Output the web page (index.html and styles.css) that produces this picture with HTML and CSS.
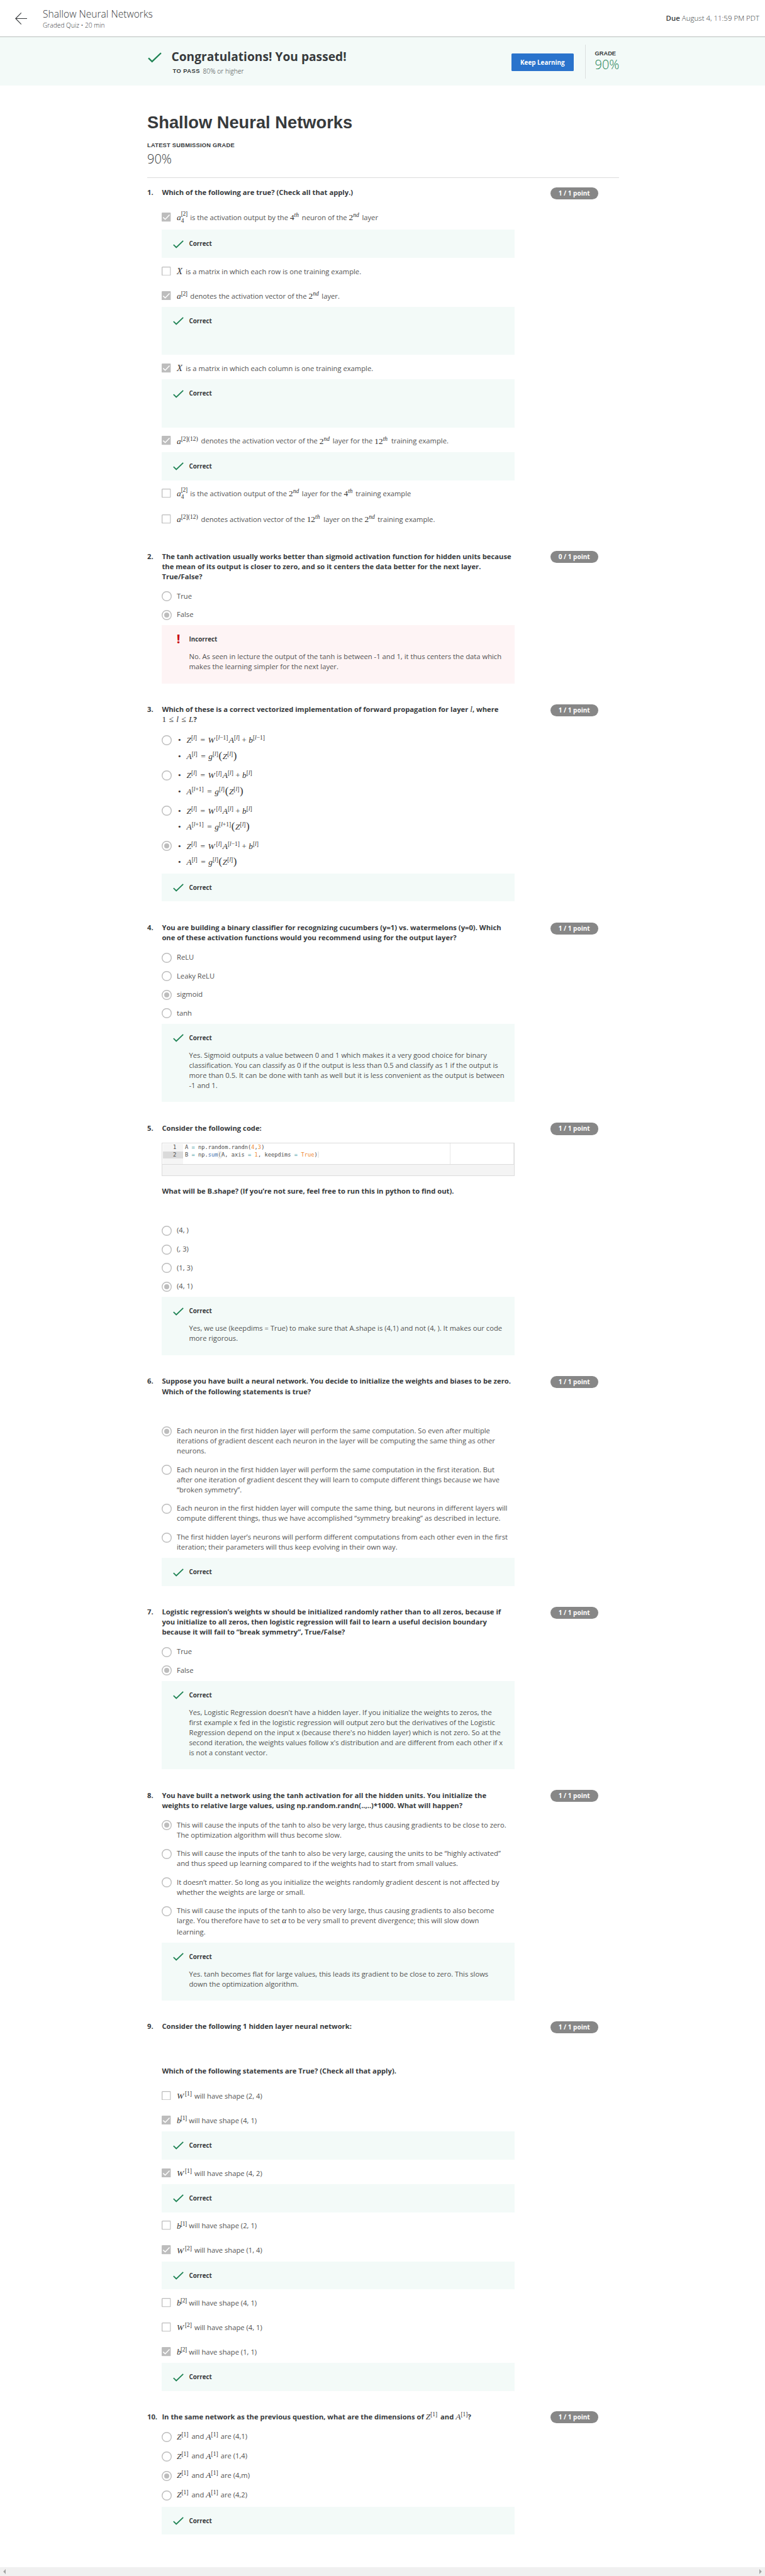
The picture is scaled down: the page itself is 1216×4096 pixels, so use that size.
FILE: index.html
```html
<!DOCTYPE html>
<html lang="en">
<head>
<meta charset="utf-8">
<title>Shallow Neural Networks</title>
<link rel="stylesheet" href="styles.css">
</head>
<body>
<svg class="defs" width="0" height="0" aria-hidden="true">
  <symbol id="tick" viewBox="0 0 17 13"><path d="M.8 7.2 5.2 11.4 16.2.9" fill="none" stroke="#1f8354" stroke-width="1.8"/></symbol>
  <symbol id="box-on" viewBox="0 0 14.6 14.6"><rect width="14.6" height="14.6" rx="1.3" fill="#bdbdbd"/><path d="M2.3 7.6 5.6 10.8 12.5 3.6" fill="none" stroke="#fff" stroke-width="1.5"/></symbol>
  <symbol id="box-off" viewBox="0 0 14.6 14.6"><rect x=".65" y=".65" width="13.3" height="13.3" rx=".8" fill="#fff" stroke="#bdbdbd" stroke-width="1.3"/></symbol>
  <symbol id="dot-off" viewBox="0 0 16 16"><circle cx="8" cy="8" r="7.3" fill="#fff" stroke="#bdbdbd" stroke-width="1.4"/></symbol>
  <symbol id="dot-on" viewBox="0 0 16 16"><circle cx="8" cy="8" r="7.3" fill="#fff" stroke="#bdbdbd" stroke-width="1.4"/><circle cx="8" cy="8" r="4" fill="#bdbdbd"/></symbol>
</svg>

<header class="topbar">
  <svg class="back" viewBox="0 0 19 19"><path d="M19 9.5H.8M9.8.4.8 9.5l9 9.1" fill="none" stroke="#373a3c" stroke-width="1.1"/></svg>
  <div class="heading"><div class="name">Shallow Neural Networks</div><div class="kind">Graded Quiz • 20 min</div></div>
  <div class="due"><b>Due</b> August 4, 11:59 PM PDT</div>
</header>

<section class="banner">
  <svg class="big-tick"><use href="#tick"/></svg>
  <div class="verdict"><div class="congrats">Congratulations! You passed!</div><div class="topass"><b>TO PASS</b><span>80% or higher</span></div></div>
  <div class="keep">Keep Learning</div>
  <div class="grade"><b>GRADE</b><span>90%</span></div>
</section>

<main class="content">
  <h1>Shallow Neural Networks</h1>
  <div class="latest">LATEST SUBMISSION GRADE</div>
  <div class="score">90%</div>

  <div class="questions">
  <section class="question first">
    <div class="num">1.</div>
    <div class="body">
      <div class="prompt">Which of the following are true? (Check all that apply.)</div>
      <div class="checks">
        <div class="check tall"><svg><use href="#box-on"/></svg><p><span class="m w-a"><i>a</i><span class="stack"><span>[2]</span><span>4</span></span></span>is the activation output by the <span class="m w-4th">4<sup><i>th</i></sup></span>neuron of the <span class="m w-2nd">2<sup><i>nd</i></sup></span>layer</p></div>
        <div class="feedback"><svg><use href="#tick"/></svg><div class="label">Correct</div></div>
        <div class="check"><svg><use href="#box-off"/></svg><p><span class="m w-x"><i>X</i></span>is a matrix in which each row is one training example.</p></div>
        <div class="check"><svg><use href="#box-on"/></svg><p><span class="m w-a"><i>a</i><sup>[2]</sup></span>denotes the activation vector of the <span class="m w-2nd">2<sup><i>nd</i></sup></span>layer.</p></div>
        <div class="feedback blank"><svg><use href="#tick"/></svg><div class="label">Correct</div></div>
        <div class="check"><svg><use href="#box-on"/></svg><p><span class="m w-x"><i>X</i></span>is a matrix in which each column is one training example.</p></div>
        <div class="feedback blank"><svg><use href="#tick"/></svg><div class="label">Correct</div></div>
        <div class="check"><svg><use href="#box-on"/></svg><p><span class="m w-a12"><i>a</i><sup>[2](12)</sup></span>denotes the activation vector of the <span class="m w-2nd">2<sup><i>nd</i></sup></span>layer for the <span class="m w-12th">12<sup><i>th</i></sup></span>training example.</p></div>
        <div class="feedback"><svg><use href="#tick"/></svg><div class="label">Correct</div></div>
        <div class="check tall"><svg><use href="#box-off"/></svg><p><span class="m w-a"><i>a</i><span class="stack"><span>[2]</span><span>4</span></span></span>is the activation output of the <span class="m w-2nd">2<sup><i>nd</i></sup></span>layer for the <span class="m w-4th">4<sup><i>th</i></sup></span>training example</p></div>
        <div class="check"><svg><use href="#box-off"/></svg><p><span class="m w-a12"><i>a</i><sup>[2](12)</sup></span>denotes activation vector of the <span class="m w-12th">12<sup><i>th</i></sup></span>layer on the <span class="m w-2nd">2<sup><i>nd</i></sup></span>training example.</p></div>
      </div>
    </div>
    <div class="pill">1 / 1 point</div>
  </section>

  <section class="question">
    <div class="num">2.</div>
    <div class="body">
      <div class="prompt">The tanh activation usually works better than sigmoid activation function for hidden units because<br>the mean of its output is closer to zero, and so it centers the data better for the next layer.<br>True/False?</div>
      <div class="radios">
        <div class="radio"><svg><use href="#dot-off"/></svg><p>True</p></div>
        <div class="radio"><svg><use href="#dot-on"/></svg><p>False</p></div>
      </div>
      <div class="feedback wrong"><span class="bang">!</span><div class="label">Incorrect</div><p>No. As seen in lecture the output of the tanh is between -1 and 1, it thus centers the data which<br>makes the learning simpler for the next layer.</p></div>
    </div>
    <div class="pill">0 / 1 point</div>
  </section>

  <section class="question">
    <div class="num">3.</div>
    <div class="body">
      <div class="prompt math-prompt">Which of these is a correct vectorized implementation of forward propagation for layer <span class="m"><i>l</i></span>, where<br><span class="m range">1 <span class="le">≤</span> <i>l</i> <span class="le">≤</span> <i>L</i></span>?</div>
      <div class="radios equations">
        <div class="radio"><svg><use href="#dot-off"/></svg><ul>
          <li class="m"><i>Z</i><sup>[<i>l</i>]</sup><span class="eq">=</span><i>W</i><sup class="far">[<i>l</i>−1]</sup><i class="next">A</i><sup>[<i>l</i>]</sup><span class="plus">+</span><i>b</i><sup>[<i>l</i>−1]</sup></li>
          <li class="m"><i>A</i><sup>[<i>l</i>]</sup><span class="eq">=</span><i>g</i><sup>[<i>l</i>]</sup><span class="paren">(</span><i>Z</i><sup>[<i>l</i>]</sup><span class="paren">)</span></li></ul></div>
        <div class="radio"><svg><use href="#dot-off"/></svg><ul>
          <li class="m"><i>Z</i><sup>[<i>l</i>]</sup><span class="eq">=</span><i>W</i><sup class="far">[<i>l</i>]</sup><i class="next">A</i><sup>[<i>l</i>]</sup><span class="plus">+</span><i>b</i><sup>[<i>l</i>]</sup></li>
          <li class="m"><i>A</i><sup>[<i>l</i>+1]</sup><span class="eq">=</span><i>g</i><sup>[<i>l</i>]</sup><span class="paren">(</span><i>Z</i><sup>[<i>l</i>]</sup><span class="paren">)</span></li></ul></div>
        <div class="radio"><svg><use href="#dot-off"/></svg><ul>
          <li class="m"><i>Z</i><sup>[<i>l</i>]</sup><span class="eq">=</span><i>W</i><sup class="far">[<i>l</i>]</sup><i class="next">A</i><sup>[<i>l</i>]</sup><span class="plus">+</span><i>b</i><sup>[<i>l</i>]</sup></li>
          <li class="m"><i>A</i><sup>[<i>l</i>+1]</sup><span class="eq">=</span><i>g</i><sup>[<i>l</i>+1]</sup><span class="paren">(</span><i>Z</i><sup>[<i>l</i>]</sup><span class="paren">)</span></li></ul></div>
        <div class="radio"><svg><use href="#dot-on"/></svg><ul>
          <li class="m"><i>Z</i><sup>[<i>l</i>]</sup><span class="eq">=</span><i>W</i><sup class="far">[<i>l</i>]</sup><i class="next">A</i><sup>[<i>l</i>−1]</sup><span class="plus">+</span><i>b</i><sup>[<i>l</i>]</sup></li>
          <li class="m"><i>A</i><sup>[<i>l</i>]</sup><span class="eq">=</span><i>g</i><sup>[<i>l</i>]</sup><span class="paren">(</span><i>Z</i><sup>[<i>l</i>]</sup><span class="paren">)</span></li></ul></div>
      </div>
      <div class="feedback"><svg><use href="#tick"/></svg><div class="label">Correct</div></div>
    </div>
    <div class="pill">1 / 1 point</div>
  </section>

  <section class="question">
    <div class="num">4.</div>
    <div class="body">
      <div class="prompt">You are building a binary classifier for recognizing cucumbers (y=1) vs. watermelons (y=0). Which<br>one of these activation functions would you recommend using for the output layer?</div>
      <div class="radios">
        <div class="radio"><svg><use href="#dot-off"/></svg><p>ReLU</p></div>
        <div class="radio"><svg><use href="#dot-off"/></svg><p>Leaky ReLU</p></div>
        <div class="radio"><svg><use href="#dot-on"/></svg><p>sigmoid</p></div>
        <div class="radio"><svg><use href="#dot-off"/></svg><p>tanh</p></div>
      </div>
      <div class="feedback"><svg><use href="#tick"/></svg><div class="label">Correct</div><p>Yes. Sigmoid outputs a value between 0 and 1 which makes it a very good choice for binary<br>classification. You can classify as 0 if the output is less than 0.5 and classify as 1 if the output is<br>more than 0.5. It can be done with tanh as well but it is less convenient as the output is between<br>-1 and 1.</p></div>
    </div>
    <div class="pill">1 / 1 point</div>
  </section>

  <section class="question">
    <div class="num">5.</div>
    <div class="body">
      <div class="prompt">Consider the following code:</div>
      <div class="editor">
        <div class="pane">
          <div class="gutter"><div>1</div><div class="active">2</div></div>
          <div class="code"><div>A <em>=</em> np.random.randn(<b>4</b>,<b>3</b>)</div><div>B <em>=</em> np.<u>sum</u><span class="match">(</span>A, axis <em>=</em> <b>1</b>, keepdims <em>=</em> <b>True</b><span class="cursor">)</span></div></div>
          <div class="ruler"></div>
        </div>
        <div class="tray"></div>
      </div>
      <div class="prompt after-editor">What will be B.shape? (If you’re not sure, feel free to run this in python to find out).</div>
      <div class="radios spaced">
        <div class="radio"><svg><use href="#dot-off"/></svg><p>(4, )</p></div>
        <div class="radio"><svg><use href="#dot-off"/></svg><p>(, 3)</p></div>
        <div class="radio"><svg><use href="#dot-off"/></svg><p>(1, 3)</p></div>
        <div class="radio"><svg><use href="#dot-on"/></svg><p>(4, 1)</p></div>
      </div>
      <div class="feedback"><svg><use href="#tick"/></svg><div class="label">Correct</div><p>Yes, we use (keepdims = True) to make sure that A.shape is (4,1) and not (4, ). It makes our code<br>more rigorous.</p></div>
    </div>
    <div class="pill">1 / 1 point</div>
  </section>

  <section class="question">
    <div class="num">6.</div>
    <div class="body">
      <div class="prompt">Suppose you have built a neural network. You decide to initialize the weights and biases to be zero.<br>Which of the following statements is true?</div>
      <div class="radios spaced">
        <div class="radio"><svg><use href="#dot-on"/></svg><p>Each neuron in the first hidden layer will perform the same computation. So even after multiple<br>iterations of gradient descent each neuron in the layer will be computing the same thing as other<br>neurons.</p></div>
        <div class="radio"><svg><use href="#dot-off"/></svg><p>Each neuron in the first hidden layer will perform the same computation in the first iteration. But<br>after one iteration of gradient descent they will learn to compute different things because we have<br>“broken symmetry”.</p></div>
        <div class="radio"><svg><use href="#dot-off"/></svg><p>Each neuron in the first hidden layer will compute the same thing, but neurons in different layers will<br>compute different things, thus we have accomplished “symmetry breaking” as described in lecture.</p></div>
        <div class="radio"><svg><use href="#dot-off"/></svg><p>The first hidden layer’s neurons will perform different computations from each other even in the first<br>iteration; their parameters will thus keep evolving in their own way.</p></div>
      </div>
      <div class="feedback"><svg><use href="#tick"/></svg><div class="label">Correct</div></div>
    </div>
    <div class="pill">1 / 1 point</div>
  </section>

  <section class="question">
    <div class="num">7.</div>
    <div class="body">
      <div class="prompt">Logistic regression’s weights w should be initialized randomly rather than to all zeros, because if<br>you initialize to all zeros, then logistic regression will fail to learn a useful decision boundary<br>because it will fail to “break symmetry”, True/False?</div>
      <div class="radios">
        <div class="radio"><svg><use href="#dot-off"/></svg><p>True</p></div>
        <div class="radio"><svg><use href="#dot-on"/></svg><p>False</p></div>
      </div>
      <div class="feedback"><svg><use href="#tick"/></svg><div class="label">Correct</div><p>Yes, Logistic Regression doesn't have a hidden layer. If you initialize the weights to zeros, the<br>first example x fed in the logistic regression will output zero but the derivatives of the Logistic<br>Regression depend on the input x (because there's no hidden layer) which is not zero. So at the<br>second iteration, the weights values follow x's distribution and are different from each other if x<br>is not a constant vector.</p></div>
    </div>
    <div class="pill">1 / 1 point</div>
  </section>

  <section class="question">
    <div class="num">8.</div>
    <div class="body">
      <div class="prompt">You have built a network using the tanh activation for all the hidden units. You initialize the<br>weights to relative large values, using np.random.randn(..,..)*1000. What will happen?</div>
      <div class="radios">
        <div class="radio"><svg><use href="#dot-on"/></svg><p>This will cause the inputs of the tanh to also be very large, thus causing gradients to be close to zero.<br>The optimization algorithm will thus become slow.</p></div>
        <div class="radio"><svg><use href="#dot-off"/></svg><p>This will cause the inputs of the tanh to also be very large, causing the units to be “highly activated”<br>and thus speed up learning compared to if the weights had to start from small values.</p></div>
        <div class="radio"><svg><use href="#dot-off"/></svg><p>It doesn’t matter. So long as you initialize the weights randomly gradient descent is not affected by<br>whether the weights are large or small.</p></div>
        <div class="radio"><svg><use href="#dot-off"/></svg><p>This will cause the inputs of the tanh to also be very large, thus causing gradients to also become<br>large. You therefore have to set <span class="m"><i>α</i></span> to be very small to prevent divergence; this will slow down<br><span class="low-line">learning.</span></p></div>
      </div>
      <div class="feedback"><svg><use href="#tick"/></svg><div class="label">Correct</div><p>Yes. tanh becomes flat for large values, this leads its gradient to be close to zero. This slows<br>down the optimization algorithm.</p></div>
    </div>
    <div class="pill">1 / 1 point</div>
  </section>

  <section class="question">
    <div class="num">9.</div>
    <div class="body">
      <div class="prompt">Consider the following 1 hidden layer neural network:</div>
      <div class="prompt after-figure">Which of the following statements are True? (Check all that apply).</div>
      <div class="checks">
        <div class="check"><svg><use href="#box-off"/></svg><p><span class="m w-w"><i>W</i><sup class="far">[1]</sup></span>will have shape (2, 4)</p></div>
        <div class="check"><svg><use href="#box-on"/></svg><p><span class="m w-b"><i>b</i><sup>[1]</sup></span>will have shape (4, 1)</p></div>
        <div class="feedback"><svg><use href="#tick"/></svg><div class="label">Correct</div></div>
        <div class="check"><svg><use href="#box-on"/></svg><p><span class="m w-w"><i>W</i><sup class="far">[1]</sup></span>will have shape (4, 2)</p></div>
        <div class="feedback"><svg><use href="#tick"/></svg><div class="label">Correct</div></div>
        <div class="check"><svg><use href="#box-off"/></svg><p><span class="m w-b"><i>b</i><sup>[1]</sup></span>will have shape (2, 1)</p></div>
        <div class="check"><svg><use href="#box-on"/></svg><p><span class="m w-w"><i>W</i><sup class="far">[2]</sup></span>will have shape (1, 4)</p></div>
        <div class="feedback"><svg><use href="#tick"/></svg><div class="label">Correct</div></div>
        <div class="check"><svg><use href="#box-off"/></svg><p><span class="m w-b"><i>b</i><sup>[2]</sup></span>will have shape (4, 1)</p></div>
        <div class="check"><svg><use href="#box-off"/></svg><p><span class="m w-w"><i>W</i><sup class="far">[2]</sup></span>will have shape (4, 1)</p></div>
        <div class="check"><svg><use href="#box-on"/></svg><p><span class="m w-b"><i>b</i><sup>[2]</sup></span>will have shape (1, 1)</p></div>
        <div class="feedback"><svg><use href="#tick"/></svg><div class="label">Correct</div></div>
      </div>
    </div>
    <div class="pill">1 / 1 point</div>
  </section>

  <section class="question">
    <div class="num">10.</div>
    <div class="body">
      <div class="prompt math-prompt">In the same network as the previous question, what are the dimensions of <span class="m w-z"><i>Z</i><sup>[1]</sup></span>and <span class="m"><i>A</i><sup>[1]</sup></span>?</div>
      <div class="radios formulas">
        <div class="radio"><svg><use href="#dot-off"/></svg><p><span class="m w-z"><i>Z</i><sup>[1]</sup></span>and <span class="m w-z"><i>A</i><sup>[1]</sup></span>are (4,1)</p></div>
        <div class="radio"><svg><use href="#dot-off"/></svg><p><span class="m w-z"><i>Z</i><sup>[1]</sup></span>and <span class="m w-z"><i>A</i><sup>[1]</sup></span>are (1,4)</p></div>
        <div class="radio"><svg><use href="#dot-on"/></svg><p><span class="m w-z"><i>Z</i><sup>[1]</sup></span>and <span class="m w-z"><i>A</i><sup>[1]</sup></span>are (4,m)</p></div>
        <div class="radio"><svg><use href="#dot-off"/></svg><p><span class="m w-z"><i>Z</i><sup>[1]</sup></span>and <span class="m w-z"><i>A</i><sup>[1]</sup></span>are (4,2)</p></div>
      </div>
      <div class="feedback"><svg><use href="#tick"/></svg><div class="label">Correct</div></div>
    </div>
    <div class="pill">1 / 1 point</div>
  </section>
  </div>
</main>

<footer class="scrollbar">
  <svg viewBox="0 0 4 8"><path d="M4 0v8L.2 4z" fill="#a3a3a3"/></svg>
  <svg viewBox="0 0 4 8"><path d="M0 0v8l3.8-4z" fill="#a3a3a3"/></svg>
</footer>
</body>
</html>
```
FILE: styles.css
```css
* { box-sizing: border-box; }
body {
  margin: 0;
  width: 1216px;
  height: 4096px;
  overflow: hidden;
  display: flex;
  flex-direction: column;
  background: #fff;
  color: #525252;
  font: 11.23px/16.04px "Open Sans", "Noto Sans", sans-serif;
}
p, ul, h1 { margin: 0; padding: 0; }
.defs { position: absolute; }

.topbar {
  flex: none;
  height: 59px;
  border-bottom: 1px solid #b9bfbd;
  display: flex;
  align-items: center;
  padding: 0 9px 0 24px;
  color: #373a3c;
}
.back { width: 19px; height: 19px; margin-right: 25px; }
.heading { flex: 1; }
.name { font-size: 15.6px; line-height: 20px; font-weight: 300; }
.kind { font-size: 10.2px; line-height: 14px; font-weight: 300; margin-top: 1px; }
.due { font-size: 11.5px; font-weight: 300; }
.due b { font-weight: 600; }

.banner {
  flex: none;
  height: 77px;
  background: #f3faf8;
  padding-left: 235px;
  display: flex;
  align-items: flex-start;
  color: #373a3c;
}
.big-tick { width: 22px; height: 17px; margin: 24px 15.5px 0 0; flex: none; }
.verdict { width: 540.5px; padding-top: 17px; }
.congrats { font-size: 19.2px; line-height: 27px; font-weight: 700; }
.topass { display: flex; gap: 4.5px; font-size: 10.3px; line-height: 14px; margin: 3px 0 0 2px; font-weight: 300; }
.topass b, .grade b, .latest { font-family: "Liberation Sans", Arial, sans-serif; font-size: 9.3px; letter-spacing: .25px; font-weight: 700; }
.topass b { letter-spacing: .5px; }
.keep {
  width: 98.5px;
  height: 28.8px;
  margin-top: 25.6px;
  border-radius: 1.5px;
  background: #2a73cc;
  color: #fff;
  font-size: 9.9px;
  line-height: 29px;
  font-weight: 700;
  text-align: center;
}
.grade { margin: 11.5px 0 0 18.7px; height: 54.4px; padding: 6px 0 0 14.3px; display: flex; flex-direction: column; border-left: 1px solid #dcdfdf; }
.grade b { line-height: 16px; letter-spacing: 0; }
.grade span { font-size: 20px; line-height: 19px; font-weight: 300; color: #1f8354; }

.content { width: 749.5px; margin-left: 234px; flex: none; }
h1 { font: 700 27.3px/34px "Liberation Sans", Arial, sans-serif; color: #373a3c; margin-top: 42px; }
.latest { margin-top: 11px; line-height: 16px; color: #373a3c; }
.score { font-size: 20px; line-height: 24px; font-weight: 300; color: #373a3c; margin-top: 2px; height: 41px; }

.questions {
  display: grid;
  grid-template-rows: 594.2px 243.5px 347px 318.7px 402.7px 366.8px 291.4px 367.7px 620.3px 200px;
}
.question {
  display: grid;
  grid-template-columns: 23.4px 560.8px 1fr;
  align-items: start;
}
.question.first { border-top: 1px solid #dcdcdc; padding-top: 14.6px; }
.body, .num { padding-top: .4px; }
.num, .prompt { font-weight: 700; color: #373a3c; }
.num { white-space: nowrap; }
.pill {
  width: 76.2px;
  height: 19.2px;
  margin-left: 56.4px;
  border-radius: 9.6px;
  background: #878787;
  color: #fff;
  font-size: 10px;
  line-height: 19.6px;
  font-weight: 700;
  text-align: center;
}
.prompt, .radio p, .check p, .feedback p { white-space: nowrap; }
.math-prompt { padding-bottom: 1px; }

.checks { margin-top: 10.3px; }
.check { display: flex; height: 39px; padding-top: 13.7px; }
.check.tall { height: 41px; }
.check svg { width: 14.6px; height: 14.6px; margin-right: 9px; flex: none; }

.radios { margin-top: 15.4px; margin-bottom: 8.5px; display: flex; flex-direction: column; gap: 13.5px; }
.radios.spaced { margin-top: 47.2px; }
.radio { display: flex; }
.radio svg { width: 16px; height: 16px; margin: 0 8.3px 0 -.7px; flex: none; }
.radio p { margin-top: -.6px; margin-bottom: .6px; }
.formulas .radio { height: 17.4px; }
.low-line { display: inline-block; padding-top: 1.3px; }

.feedback {
  display: grid;
  grid-template-columns: 17px 1fr;
  column-gap: 8.4px;
  background: #f3faf8;
  min-height: 44.8px;
  padding: 15px 0 0 17.7px;
  align-content: start;
}
.feedback.blank { min-height: 76.3px; }
.feedback.wrong { background: #fef4f5; }
.feedback svg { width: 17px; height: 13px; margin-top: 1.3px; }
.bang { color: #c7000b; font-size: 20px; line-height: 14px; font-weight: 700; text-align: center; }
.label { font-size: 9.8px; line-height: 16px; font-weight: 700; color: #373a3c; }
.feedback p { grid-column: 2; margin: 11px 0 18.3px; }

.m { font-family: "Liberation Serif", "Times New Roman", serif; font-size: 13.4px; font-weight: 400; line-height: 0; color: #333; }
.m sup { font-size: 9.5px; line-height: 0; vertical-align: 4.8px; }
.m sup.far { margin-left: 1.8px; }
.stack { display: inline-flex; flex-direction: column; vertical-align: 6.8px; margin: -6px 0; font-size: 9.5px; line-height: 10.4px; letter-spacing: -.3px; }
p .m, .w-z { display: inline-block; }
.w-a { width: 21.3px; }
.w-a sup, .w-b sup { letter-spacing: -.4px; }
.w-a12 { width: 38.6px; }
.w-4th { width: 18.9px; }
.w-2nd { width: 20.9px; }
.w-12th { width: 26.7px; }
.w-x { width: 14.3px; font-size: 14.6px; }
.w-w { width: 28px; }
.w-b { width: 19.3px; }
.w-b i { letter-spacing: -.7px; }
.w-z { width: 23.4px; }
.le { margin: 0 1px; }

.equations { margin-top: 15.7px; }
.equations ul { list-style: none; margin-top: .3px; }
.equations li { height: 25.5px; line-height: 16px; white-space: nowrap; }
.equations li + li { height: 16.9px; }
.equations li::before { content: "•"; display: inline-block; width: 13.5px; margin-left: 2px; }
.eq { margin: 0 4.5px 0 5.5px; }
.plus { margin: 0 3.3px; }
.next { margin-left: 1.3px; }
.paren { font-size: 17px; line-height: 0; margin: 0 .6px; }

.editor { border: 1px solid #dcdcdc; height: 52.4px; margin-top: 15.6px; display: flex; flex-direction: column; }
.pane { flex: 1; display: flex; position: relative; padding: 1px 0 0 1px; border: solid #e8e8e8; border-width: 0 1px 0 0; font: 8.75px/11.5px "DejaVu Sans Mono", monospace; color: #4d4d4c; }
.gutter { width: 32px; background: #f5f5f5; text-align: right; }
.gutter div { padding-right: 11px; }
.gutter .active { background: #dadada; }
.code { padding-left: 2.5px; white-space: pre; }
.code b { color: #f08a32; font-weight: 400; }
.code em { color: #3e999f; font-style: normal; }
.code u { color: #4271ae; text-decoration: none; }
.match { box-shadow: 0 0 0 .5px #c8c8c8; border-radius: 2px; }
.cursor { border-right: 2px solid #ececec; }
.ruler { position: absolute; right: 100px; top: 0; bottom: 0; width: 1px; background: #e8e8e8; }
.tray { height: 17.5px; background: #f4f4f4; border-top: 1px solid #dcdcdc; }
.after-editor { margin-top: 16px; }
.after-figure { margin-top: 54.3px; }

.scrollbar {
  height: 14px;
  margin-top: auto;
  flex: none;
  background: #f0f0f0;
  display: flex;
  justify-content: space-between;
  align-items: center;
  padding: 0 5px;
}
.scrollbar svg { width: 4px; height: 8px; }
```
